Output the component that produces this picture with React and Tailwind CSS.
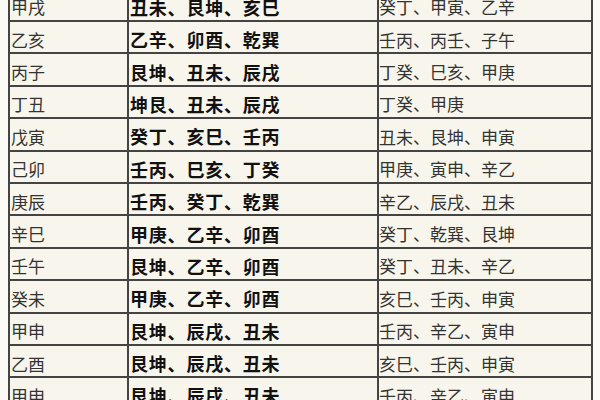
const ROWS = [
  ['甲戌', '丑未、艮坤、亥巳', '癸丁、甲寅、乙辛'],
  ['乙亥', '乙辛、卯酉、乾巽', '壬丙、丙壬、子午'],
  ['丙子', '艮坤、丑未、辰戌', '丁癸、巳亥、甲庚'],
  ['丁丑', '坤艮、丑未、辰戌', '丁癸、甲庚'],
  ['戊寅', '癸丁、亥巳、壬丙', '丑未、艮坤、申寅'],
  ['己卯', '壬丙、巳亥、丁癸', '甲庚、寅申、辛乙'],
  ['庚辰', '壬丙、癸丁、乾巽', '辛乙、辰戌、丑未'],
  ['辛巳', '甲庚、乙辛、卯酉', '癸丁、乾巽、艮坤'],
  ['壬午', '艮坤、乙辛、卯酉', '癸丁、丑未、辛乙'],
  ['癸未', '甲庚、乙辛、卯酉', '亥巳、壬丙、申寅'],
  ['甲申', '艮坤、辰戌、丑未', '壬丙、辛乙、寅申'],
  ['乙酉', '艮坤、辰戌、丑未', '亥巳、壬丙、申寅'],
  ['甲申', '艮坤、辰戌、丑未', '壬丙、辛乙、寅申'],
];

const font = { fontFamily: '"Noto Sans CJK SC", "Noto Sans CJK JP", sans-serif' };

export default function App() {
  return (
    <div className="w-[600px] h-[400px] overflow-hidden bg-[#fbfaf4]" style={font}>
      <div className="ml-[8px] w-[585px] -mt-[12.4px] border-l-2 border-r-2 border-[#444] bg-[#f8f6ec]">
        {ROWS.map((r, i) => (
          <div key={i} className="flex h-[32.4px] border-t-2 border-[#444]">
            <div className="w-[117px] flex items-center pt-1 pl-[1px] text-[17px] text-[#333] leading-none">
              {r[0]}
            </div>
            <div className="w-[250px] flex items-center pt-1 pl-[1px] border-l-2 border-[#444] text-[18px] font-bold tracking-[0.8px] text-[#111] leading-none">
              {r[1]}
            </div>
            <div className="flex-1 flex items-center pt-1 border-l-2 border-[#444] text-[17px] text-[#333] leading-none">
              {r[2]}
            </div>
          </div>
        ))}
      </div>
    </div>
  );
}
